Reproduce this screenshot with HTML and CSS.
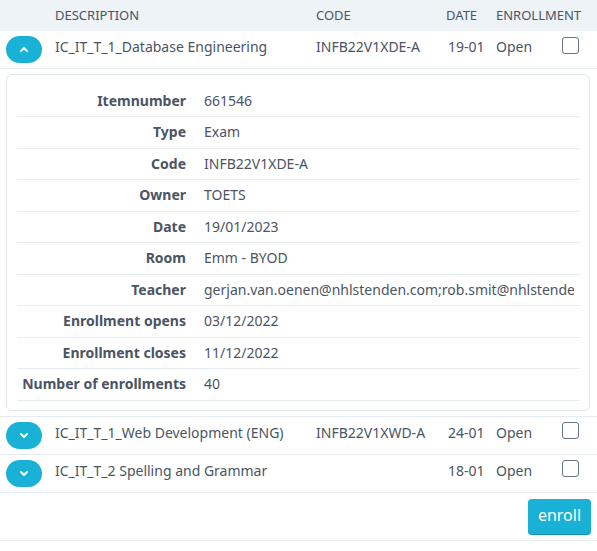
FILE: index.html
```html
<!DOCTYPE html>
<html>
<head>
<meta charset="utf-8">
<link rel="stylesheet" href="styles.css">
</head>
<body>
<div class="list">
  <div class="row head">
    <div></div>
    <div>Description</div>
    <div>Code</div>
    <div>Date</div>
    <div>Enrollment</div>
  </div>

  <div class="row">
    <div><button class="toggle"><svg width="10" height="7" viewBox="0 0 10 7"><path d="M2 5 L5 2 L8 5" fill="none" stroke="#fff" stroke-width="1.8" stroke-linecap="round" stroke-linejoin="round"/></svg></button></div>
    <div>IC_IT_T_1_Database Engineering</div>
    <div>INFB22V1XDE-A</div>
    <div class="date">19-01</div>
    <div class="enr"><span>Open</span><span class="check"></span></div>
  </div>

  <div class="detail">
    <div class="card">
      <div class="props">
        <div class="prop"><div class="lbl">Itemnumber</div><div class="val"><span class="txt">661546</span></div></div>
        <div class="prop"><div class="lbl">Type</div><div class="val"><span class="txt">Exam</span></div></div>
        <div class="prop"><div class="lbl">Code</div><div class="val"><span class="txt">INFB22V1XDE-A</span></div></div>
        <div class="prop"><div class="lbl">Owner</div><div class="val"><span class="txt">TOETS</span></div></div>
        <div class="prop"><div class="lbl">Date</div><div class="val"><span class="txt">19/01/2023</span></div></div>
        <div class="prop"><div class="lbl">Room</div><div class="val"><span class="txt">Emm - BYOD</span></div></div>
        <div class="prop"><div class="lbl">Teacher</div><div class="val"><span class="txt">gerjan.van.oenen@nhlstenden.com;rob.smit@nhlstende</span></div></div>
        <div class="prop"><div class="lbl">Enrollment opens</div><div class="val"><span class="txt">03/12/2022</span></div></div>
        <div class="prop"><div class="lbl">Enrollment closes</div><div class="val"><span class="txt">11/12/2022</span></div></div>
        <div class="prop"><div class="lbl">Number of enrollments</div><div class="val"><span class="txt">40</span></div></div>
      </div>
    </div>
  </div>

  <div class="row">
    <div><button class="toggle"><svg width="10" height="7" viewBox="0 0 10 7"><path d="M2 2 L5 5 L8 2" fill="none" stroke="#fff" stroke-width="1.8" stroke-linecap="round" stroke-linejoin="round"/></svg></button></div>
    <div>IC_IT_T_1_Web Development (ENG)</div>
    <div>INFB22V1XWD-A</div>
    <div class="date">24-01</div>
    <div class="enr"><span>Open</span><span class="check"></span></div>
  </div>

  <div class="row">
    <div><button class="toggle"><svg width="10" height="7" viewBox="0 0 10 7"><path d="M2 2 L5 5 L8 2" fill="none" stroke="#fff" stroke-width="1.8" stroke-linecap="round" stroke-linejoin="round"/></svg></button></div>
    <div>IC_IT_T_2 Spelling and Grammar</div>
    <div></div>
    <div class="date">18-01</div>
    <div class="enr"><span>Open</span><span class="check"></span></div>
  </div>

  <div class="actions">
    <button class="enroll">enroll</button>
  </div>
</div>
</body>
</html>
```

FILE: styles.css
```css
html, body {
  margin: 0;
  padding: 0;
  background: #ffffff;
}

body {
  font-family: "Noto Sans", "Open Sans", sans-serif;
  font-size: 14px;
  color: #4a5464;
  width: 597px;
}

.row {
  display: grid;
  grid-template-columns: 49px 261px 130px 50px 1fr;
  align-items: start;
  box-sizing: border-box;
  height: 38px;
  padding: 5px 0 0 6px;
  line-height: 21px;
  border-bottom: 1px solid #e6ebf0;
  white-space: nowrap;
}

.row.head {
  height: 31px;
  padding-top: 0;
  align-items: center;
  background: #eef3f7;
  border-bottom: none;
  font-size: 13px;
  text-transform: uppercase;
  color: #4a5464;
}

.date {
  padding-left: 2px;
}

.row.head .date {
  padding-left: 0;
}

.enr {
  display: flex;
  justify-content: space-between;
  align-items: flex-start;
  padding-right: 18px;
}

.check {
  width: 15px;
  height: 15px;
  margin-top: 0.5px;
  border: 1.5px solid #667586;
  border-radius: 3px;
  background: #fff;
}

.toggle {
  width: 36px;
  height: 27px;
  border: none;
  border-radius: 14px;
  background: #1ab1d7;
  padding: 0;
  display: flex;
  align-items: center;
  justify-content: center;
}

.detail {
  padding: 5px 7px 5px 6px;
  border-bottom: 1px solid #e6ebf0;
}

.card {
  border: 1px solid #dfe6ec;
  border-radius: 6px;
  padding: 10.5px 9px 9px 10px;
  overflow: hidden;
}

.props {
  display: grid;
  grid-template-columns: 178px 1fr;
}

.prop {
  display: contents;
}

.lbl, .val {
  height: 30.5px;
  line-height: 30.5px;
  border-bottom: 1px solid #e6ebf0;
  white-space: nowrap;
}

.lbl {
  font-weight: 700;
  text-align: right;
  padding: 0 9px 0 5px;
}

.val {
  padding: 0 6px 0 9px;
  min-width: 0;
}

.txt {
  display: block;
  overflow: hidden;
}

.actions {
  display: flex;
  justify-content: flex-end;
  padding: 6px 6px;
  border-bottom: 1px solid #e6ebf0;
}

.enroll {
  width: 63px;
  height: 35px;
  border: none;
  border-radius: 4px;
  background: #1ab1d7;
  box-shadow: 0 1px 0 #1392b3;
  color: #ffffff;
  font-family: "Noto Sans", "Open Sans", sans-serif;
  font-size: 16px;
  padding: 0 0 2px;
}
```
